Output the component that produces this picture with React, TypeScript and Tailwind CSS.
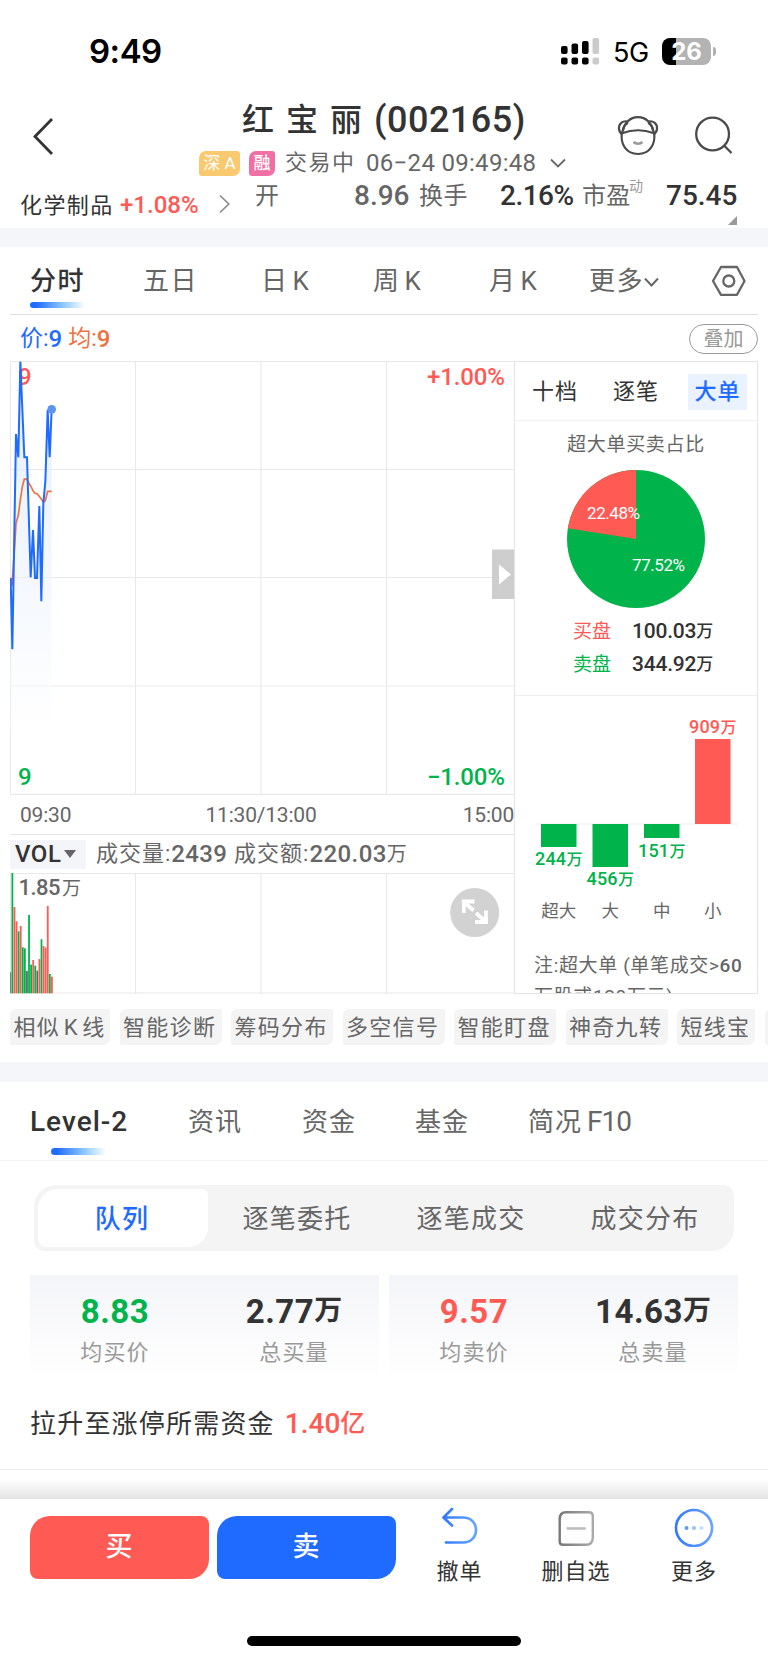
import React from "react";

const RED = "#ff5a54";
const GREEN = "#00b34b";
const BLUE = "#1f6bff";
const GRID = "#e9e9ea";

const PRICE =
  "32,684 37,898 48,252 55,322 61,35 73,322 81,322 92,682 99,540 105,684 111,684 118,468 124,754 130,460 136,395 143,180 149,322 155,178";
const AVERAGE =
  "32,684 36,708 44,590 48,520 55,495 61,450 67,410 73,387 80,388 86,398 92,408 99,422 105,430 111,431 117,438 124,447 130,457 136,452 143,424 155,424";

const VOLUMES: [number, string][] = [
  [63, "#666"], [361, GREEN], [259, RED], [216, RED], [186, GREEN], [202, RED], [138, GREEN],
  [135, GREEN], [67, "#666"], [235, GREEN], [86, GREEN], [100, RED], [83, GREEN], [68, "#666"],
  [103, RED], [162, GREEN], [142, RED], [137, RED], [262, RED], [58, GREEN], [50, RED],
];

const ORDER_BARS = [
  { x: 27, y: 128, h: 23, color: GREEN, label: "244", labelY: 169, name: "超大" },
  { x: 78.5, y: 128, h: 43, color: GREEN, label: "456", labelY: 189, name: "大" },
  { x: 130, y: 128, h: 14, color: GREEN, label: "151", labelY: 161, name: "中" },
  { x: 181, y: 43, h: 85, color: RED, label: "909", labelY: 36.5, name: "小" },
];

function StatusBar() {
  return (
    <div className="flex h-[93px] items-center pt-[9px] pl-[89px]">
      <span className="w-[472px] pt-px font-['Inter',sans-serif] text-[33px] leading-none font-semibold tracking-[-0.5px] text-black">9:49</span>
      <svg width="40" height="28" viewBox="0 0 40 28">
        {[0, 10.5, 21].map((x, i) => (
          <g key={x} fill="#000">
            <rect x={x} y={9 - i * 2.5} width="6.6" height={8 + i * 2.5} rx="2" />
            <rect x={x} y="20.5" width="6.6" height="7" rx="2" />
          </g>
        ))}
        <g fill="#cbcbcb">
          <rect x="31.5" y="1" width="6.6" height="16" rx="2" />
          <rect x="31.5" y="20.5" width="6.6" height="7" rx="2" />
        </g>
      </svg>
      <span className="ml-[12px] w-[49px] pt-[2px] font-['Inter',sans-serif] text-[27px] leading-none tracking-[-0.5px] text-black">5G</span>
      <div className="flex h-[27px] w-[49px] items-center justify-center rounded-[8px] bg-[linear-gradient(90deg,#000_28%,#b3b3b3_28%)] pt-px">
        <span className="font-['Inter',sans-serif] text-[24px] leading-none font-bold text-white">26</span>
      </div>
      <div className="ml-[2px] h-[9px] w-[3px] rounded-r-full bg-[#b3b3b3]" />
    </div>
  );
}

function Header() {
  return (
    <header className="flex h-[86px] items-start">
      <svg className="mt-[24px] ml-[32px] w-[167px]" width="167" height="40" viewBox="0 0 167 40" fill="none" stroke="#333" strokeWidth="2.8">
        <path d="M20 2 L3 19.5 L20 37" />
      </svg>
      <div className="w-[418px]">
        <div className="flex h-[54px] items-center pl-[43px] text-[#333]">
          <span className="text-[32px] leading-none font-medium tracking-[12px]">红宝丽</span>
          <span className="text-[36px] leading-none font-medium tracking-[0.5px]">(002165)</span>
        </div>
        <div className="flex h-[32px] items-center text-[#666]">
          <span className="flex h-[25px] w-[41px] items-center justify-center rounded-[3px] rounded-tl-[7px] rounded-br-[7px] bg-[#f8c96f] text-[17px] leading-none text-white">
            深 A
          </span>
          <span className="ml-[9px] flex h-[25px] w-[26px] items-center justify-center rounded-[3px] rounded-tl-[7px] rounded-br-[7px] bg-[#f070a5] text-[17px] leading-none font-medium text-white">
            融
          </span>
          <span className="ml-[10px] w-[81px] text-[22px] leading-none tracking-[1.5px]">交易中</span>
          <span className="text-[24px] leading-none tracking-[0.3px]">06−24 09:49:48</span>
          <svg className="ml-[14px]" width="16" height="10" viewBox="0 0 16 10" fill="none" stroke="#666" strokeWidth="1.8">
            <path d="M1 1.5 L8 8.5 L15 1.5" />
          </svg>
        </div>
      </div>
      <svg className="mt-[23px]" width="42" height="40" viewBox="0 0 42 40" fill="none" stroke="#4a4a4a" strokeWidth="2.2">
        <path d="M4.800 17.500 C3.500 28 9 38 21 38 C33 38 38.500 28 37.200 17.500" />
        <path d="M5 17.200 C15 13.500 27 13.500 37 17.200 C34.500 7 29 1.200 21 1.200 C13 1.200 7.500 7 5 17.200 Z" />
        <path d="M11.500 5.700 C6 4 1.500 7.500 2 13 C2.300 15.500 3.500 17 5 17.500 M6 15 C6.200 10 8 8 11 7" />
        <path d="M30.500 5.700 C36 4 40.500 7.500 40 13 C39.700 15.500 38.500 17 37 17.500 M36 15 C35.800 10 34 8 31 7" />
        <path d="M16.500 26 C19 28.300 23 28.300 25.500 26" stroke="#999" strokeWidth="2.600" />
      </svg>
      <svg className="ml-[36px] mt-[23px]" width="40" height="40" viewBox="0 0 40 40" fill="none" stroke="#4a4a4a" strokeWidth="2.3">
        <circle cx="17.600" cy="18" r="16.400" />
        <path d="M28.500 29 L36.500 37" />
      </svg>
    </header>
  );
}

function QuoteRow() {
  return (
    <div className="flex h-[49px] items-start leading-none whitespace-nowrap text-[#666]">
      <span className="mt-[16px] ml-[20px] w-[100px] text-[22px] tracking-[1.4px] text-[#333]">化学制品</span>
      <span className="mt-[14px] w-[99px] text-[24px] font-medium text-[#ff5a54]">+1.08%</span>
      <svg className="mt-[15px] w-[36px]" width="36" height="20" viewBox="0 0 36 20" fill="none" stroke="#888" strokeWidth="1.600">
        <path d="M1 1.500 L9.800 10 L1 18.500" />
      </svg>
      <span className="mt-[5px] w-[99px] text-[24px]">开</span>
      <span className="mt-[3px] w-[65px] text-[28px] font-medium">8.96</span>
      <span className="mt-[5px] w-[81px] text-[24px] tracking-[0.5px]">换手</span>
      <span className="mt-[3px] w-[82px] text-[28px] font-medium tracking-[-0.5px] text-[#333]">2.16%</span>
      <span className="mt-[5px] w-[47px] text-[24px] tracking-[0.3px]">市盈</span>
      <span className="w-[37px] text-[14px] text-[#999]">动</span>
      <div className="flex flex-col items-end">
        <span className="mt-[3px] text-[28px] font-medium text-[#333]">75.45</span>
        <svg className="mt-[6px]" width="9" height="9" viewBox="0 0 9 9">
          <path d="M9 0 V9 H0 Z" fill="#999" />
        </svg>
      </div>
    </div>
  );
}

function PeriodTabs() {
  return (
    <nav className="mx-[10px] flex h-[68px] items-start border-b border-[#dedede] pt-[21px] text-[26px] leading-none tracking-[1.5px] text-[#666]">
      <div className="ml-[20px] w-[113px]">
        <div className="font-medium text-[#333]">分时</div>
        <div className="mt-[8px] h-[6px] w-[55px] rounded-full bg-[linear-gradient(90deg,#1f6bff_10%,#8cc8ff_60%,#fff)]" />
      </div>
      <span className="w-[118px]">五日</span>
      <span className="flex w-[112px] gap-[4px]"><span>日</span><span>K</span></span>
      <span className="flex w-[116px] gap-[4px]"><span>周</span><span>K</span></span>
      <span className="flex w-[100px] gap-[4px]"><span>月</span><span>K</span></span>
      <span>更多</span>
      <svg className="mt-[9px]" width="16" height="11" viewBox="0 0 16 11" fill="none" stroke="#666" strokeWidth="1.900">
        <path d="M1 1.500 L7.500 8.500 L14 1.500" />
      </svg>
      <svg className="-mt-[3px] ml-[51px]" width="36" height="32" viewBox="0 0 36 32" fill="none" stroke="#666" strokeWidth="2.300">
        <path d="M10 2 H26 L33.500 16 L26 29.800 H10 L2 16 Z" strokeLinejoin="round" />
        <circle cx="17.800" cy="16" r="5.500" />
      </svg>
    </nav>
  );
}

function PriceChart() {
  return (
    <svg width="504" height="434" viewBox="0 0 504 434" fontFamily="Roboto, sans-serif" fontSize="24" fontWeight="500">
      <defs>
        <linearGradient id="area" x1="0" y1="0" x2="0" y2="1">
          <stop offset="0" stopColor="#d3e3f6" />
          <stop offset="1" stopColor="#fff" />
        </linearGradient>
      </defs>
      <path d="M0 .5H504M0 108.500H504M0 216.500H504M0 325H504M0 433.300H504M.5 0V434M125.500 0V434M251 0V434M376.500 0V434" stroke={GRID} strokeWidth="1.200" />
      <text x="8" y="24" fill={RED}>9</text>
      <g transform="translate(-10 -11) scale(0.33333)">
        <polygon points={`32,1150 ${PRICE} 155,1150`} fill="url(#area)" opacity="0.6" />
        <polyline points={AVERAGE} fill="none" stroke="#f07040" strokeWidth="5" />
        <polyline points={PRICE} fill="none" stroke={BLUE} strokeWidth="6" />
        <circle cx="155" cy="178" r="13" fill="#5b93ee" />
      </g>
      <text x="417" y="24" fill={RED} textLength="78">+1.00%</text>
      <text x="8" y="424" fill={GREEN}>9</text>
      <text x="417" y="424" fill={GREEN} textLength="78">−1.00%</text>
      <rect x="482" y="188.500" width="22" height="49.500" fill="#bdbdbd" opacity="0.750" />
      <path d="M489 203.500 L501 213.500 L489 223.500 Z" fill="#fff" />
    </svg>
  );
}

function VolumeChart() {
  return (
    <svg width="504" height="121" viewBox="0 0 504 121">
      <path d="M0 .5H504M0 120H504M.5 0V121M125.500 0V121M251 0V121M376.500 0V121" stroke={GRID} strokeWidth="1.200" />
      {VOLUMES.map(([v, color], i) => (
        <rect key={i} x={i === 0 ? 0.2 : i * 2.08 - 0.6} y={120.3 - v / 3} width={i === 0 ? 1 : 1.8} height={v / 3} fill={color} />
      ))}
      <g fill="#666" fontFamily="Roboto, 'Noto Sans CJK SC', sans-serif">
        <text x="8.500" y="22" fontSize="22" fontWeight="500" textLength="42">1.85</text>
        <text x="52" y="21.500" fontSize="19">万</text>
      </g>
      <circle cx="464.700" cy="39.500" r="24.500" fill="#d2d2d2" />
      <path d="M455 30 L463.500 37.500 M466 40 L474.500 47.500 M453.800 40 V28.500 H464.500 M476 37.500 V49 H465" fill="none" stroke="#fff" strokeWidth="3.800" />
    </svg>
  );
}

function OrderPie() {
  return (
    <svg className="shrink-0 self-center" width="140" height="140" viewBox="-70 -70 140 140" fontFamily="Roboto, sans-serif" fontSize="17" fill="#fff">
      <circle r="69" fill={GREEN} />
      <path d="M0 0 L-68.150 -10.800 A69 69 0 0 1 0 -69 Z" fill={RED} />
      <text x="-49" y="-20" textLength="53">22.48%</text>
      <text x="-4" y="32" textLength="53">77.52%</text>
    </svg>
  );
}

function OrderBars() {
  return (
    <svg width="243" height="236" viewBox="0 0 243 236" fontFamily="Roboto, 'Noto Sans CJK SC', sans-serif">
      <path d="M20 128H223" stroke="#eee" />
      {ORDER_BARS.map((b) => (
        <g key={b.name}>
          <rect x={b.x - 1} y={b.y} width="35.500" height={b.h} fill={b.color} />
          <text x={b.x - 7} y={b.labelY} fontSize="18" fontWeight="500" fill={b.color} textLength="31">{b.label}</text>
          <text x={b.x + 24.5} y={b.labelY} fontSize="16" fontWeight="500" fill={b.color}>万</text>
          <text x={b.x + 16.7} y="221" fontSize="17.500" fill="#666" textAnchor="middle">{b.name}</text>
        </g>
      ))}
    </svg>
  );
}

function OrderPanel() {
  return (
    <aside className="flex h-[633px] w-[245px] flex-col overflow-hidden border border-[#e4e4e5] leading-none">
      <div className="flex h-[59px] shrink-0 items-center border-b border-[#f2f2f3] pt-px text-[22px] tracking-[1px] text-[#333]">
        <span className="ml-[17px] w-[81px]">十档</span>
        <span className="w-[75px]">逐笔</span>
        <span className="flex h-[36px] w-[59px] items-center justify-center bg-[#eaf1ff] font-medium text-[#1f6bff]">大单</span>
      </div>
      <div className="mt-[14px] mb-[15px] text-center text-[19px] tracking-[0.7px] text-[#666]">超大单买卖占比</div>
      <OrderPie />
      <div className="mt-[6px] flex h-[33px] shrink-0 items-center pl-[58px]">
        <span className="w-[59px] text-[19px] text-[#ff5a54]">买盘</span>
        <span className="text-[21px] font-medium tracking-[-0.2px] text-[#333]">100.03</span>
        <span className="text-[17px] font-medium text-[#333]">万</span>
      </div>
      <div className="flex h-[33px] shrink-0 items-center pl-[58px]">
        <span className="w-[59px] text-[19px] text-[#00b34b]">卖盘</span>
        <span className="text-[21px] font-medium tracking-[-0.2px] text-[#333]">344.92</span>
        <span className="text-[17px] font-medium text-[#333]">万</span>
      </div>
      <div className="mt-[14px] h-px shrink-0 bg-[#eeeeef]" />
      <div className="h-[236px] shrink-0"><OrderBars /></div>
      <p className="mt-[18px] pl-[19px] text-[19px] leading-[31px] tracking-[0.65px] whitespace-nowrap text-[#666]">
        注:超大单 (单笔成交&gt;<span className="font-medium">60</span>
        <br />
        万股或120万元)
      </p>
    </aside>
  );
}

function ChartSection() {
  return (
    <section>
      <div className="flex h-[46px] items-center pt-px pr-[10px] pl-[20px] text-[#1f6bff]">
        <span className="text-[23px] leading-none">价:</span>
        <span className="text-[24px] leading-none font-medium">9</span>
        <span className="ml-[6px] text-[23px] leading-none text-[#f07040]">均:</span>
        <span className="text-[24px] leading-none font-medium text-[#f07040]">9</span>
        <span className="ml-auto flex h-[30px] w-[69px] items-center justify-center rounded-full border border-[#999] pt-px text-[20px] leading-none text-[#999]">
          叠加
        </span>
      </div>
      <div className="flex px-[10px]">
        <div className="flex w-[504px] flex-col">
          <PriceChart />
          <div className="flex h-[40px] items-center justify-between border-b border-[#e4e4e5] pt-[2px] pl-[10px] text-[21px] leading-none tracking-[-0.2px] text-[#666]">
            <span>09:30</span>
            <span className="mr-[12px]">11:30/13:00</span>
            <span>15:00</span>
          </div>
          <div className="flex h-[38px] items-center leading-none text-[#666]">
            <span className="flex h-[29px] w-[76px] items-center bg-[#f4f5f8] pl-[5px] text-[24px] font-medium tracking-[0.5px] text-[#333]">
              VOL
              <svg className="ml-[3px]" width="12" height="8" viewBox="0 0 12 8">
                <path d="M0 0 H12 L6 8 Z" fill="#666" />
              </svg>
            </span>
            <span className="ml-[10px] text-[22px] tracking-[1px]">成交量:</span>
            <span className="text-[24px] font-medium tracking-[0.3px]">2439</span>
            <span className="ml-[7px] text-[22px] tracking-[1px]">成交额:</span>
            <span className="text-[24px] font-medium tracking-[0.4px]">220.03</span>
            <span className="text-[20px]">万</span>
          </div>
          <VolumeChart />
        </div>
        <OrderPanel />
      </div>
    </section>
  );
}

const TOOLS: [string, string][] = [
  ["相似\u200AK\u200A线", "w-[100px]"],
  ["智能诊断", "w-[102px]"],
  ["筹码分布", "w-[102px]"],
  ["多空信号", "w-[102px]"],
  ["智能盯盘", "w-[102px]"],
  ["神奇九转", "w-[102px]"],
  ["短线宝", "w-[78px]"],
  ["", "w-[78px]"],
];

function ToolChips() {
  return (
    <div className="flex h-[68px] gap-[9.500px] overflow-hidden pt-[15px] pl-[10px]">
      {TOOLS.map(([name, width]) => (
        <span
          key={name}
          className={`${width} flex h-[36px] shrink-0 items-center rounded-[2px] rounded-tl-[6px] rounded-br-[7px] bg-[#f4f4f5] pt-px pl-[3.500px] text-[22px] leading-none tracking-[1.300px] whitespace-pre text-[#666]`}
        >
          {name}
        </span>
      ))}
    </div>
  );
}

function InfoTabs() {
  return (
    <nav className="flex h-[79px] items-start border-b border-[#f3f3f4] pt-[26px] text-[26px] leading-none tracking-[1px] text-[#666]">
      <div className="ml-[30px] flex w-[158px] flex-col">
        <span className="text-[28px] font-medium tracking-[1px] text-[#333]">Level-2</span>
        <div className="mt-[12px] ml-[21px] h-[7px] w-[55px] rounded-full bg-[linear-gradient(90deg,#1f6bff_10%,#8cc8ff_60%,#fff)]" />
      </div>
      <span className="w-[114px] pt-px">资讯</span>
      <span className="w-[113px] pt-px">资金</span>
      <span className="w-[113px] pt-px">基金</span>
      <span className="pt-px">简况</span>
      <span className="ml-[5px] text-[28px] tracking-[-1px]">F10</span>
    </nav>
  );
}

function Segments() {
  return (
    <div className="mx-[34px] mt-[24px] flex h-[66px] rounded-tl-[22px] rounded-tr-[10px] rounded-br-[22px] rounded-bl-[10px] bg-[#f4f4f5] p-[4px] text-[26px] leading-none tracking-[1.200px] text-[#666]">
      <span className="flex w-[170px] items-center justify-center rounded-tl-[20px] rounded-tr-[6px] rounded-br-[20px] rounded-bl-[8px] bg-white pt-px pr-[2px] font-medium text-[#1f6bff]">
        队列
      </span>
      <span className="flex flex-1 items-center justify-center pt-px pl-[4px]">逐笔委托</span>
      <span className="flex flex-1 items-center justify-center pt-px pl-[4px]">逐笔成交</span>
      <span className="flex flex-1 items-center justify-center pt-px pl-[4px]">成交分布</span>
    </div>
  );
}

function Stat({ value, unit, label, tone }: { value: string; unit?: string; label: string; tone: string }) {
  return (
    <div className={`flex flex-1 flex-col items-center pt-[19px] leading-none ${tone}`}>
      <div className="flex h-[34px] items-center font-bold">
        <span className="text-[33px] tracking-[0.500px]">{value}</span>
        {unit && <span className="text-[28px]">{unit}</span>}
      </div>
      <span className="mt-[14px] text-[22px] tracking-[1.200px] text-[#999]">{label}</span>
    </div>
  );
}

function QueueSummary() {
  return (
    <div className="mt-[24px] flex h-[106px] gap-[10px] px-[30px]">
      <div className="flex flex-1 bg-linear-to-b from-[#f4f5f8] to-white">
        <Stat value="8.83" label="均买价" tone="pr-[4px] text-[#00b34b]" />
        <Stat value="2.77" unit="万" label="总买量" tone="pl-[5px] text-[#333]" />
      </div>
      <div className="flex flex-1 bg-linear-to-b from-[#f4f5f8] to-white">
        <Stat value="9.57" label="均卖价" tone="pr-[4px] text-[#ff5a54]" />
        <Stat value="14.63" unit="万" label="总卖量" tone="pl-[5px] text-[#333]" />
      </div>
    </div>
  );
}

function BottomBar() {
  return (
    <footer>
      <div className="flex h-[101px] items-start pt-[17px] pl-[30px] text-[22px] leading-none tracking-[1px] text-[#333]">
        <button className="flex h-[63px] w-[179px] items-center justify-center rounded-tl-[20px] rounded-tr-[8px] rounded-br-[20px] rounded-bl-[8px] bg-[#ff5a54] text-[27px] font-medium text-white">
          买
        </button>
        <button className="ml-[8px] flex h-[63px] w-[179px] items-center justify-center rounded-tl-[20px] rounded-tr-[8px] rounded-br-[20px] rounded-bl-[8px] bg-[#1f6bff] text-[27px] font-medium text-white">
          卖
        </button>
        <div className="-mt-[9px] ml-[22px] flex w-[83px] flex-col items-center">
          <svg width="40" height="40" viewBox="0 0 40 40" fill="none" stroke="#4c91fb" strokeWidth="2.700" strokeLinecap="round" strokeLinejoin="round">
            <defs>
              <linearGradient id="back" x1="0" x2="1" y1="0" y2="0">
                <stop offset="0" stopColor="#3478f7" />
                <stop offset="1" stopColor="#66a5ff" />
              </linearGradient>
            </defs>
            <path stroke="url(#back)" d="M12 2 L3.500 10.500 L12 18.500 M3.500 10.500 H23 C31 10.500 36 16 36 23 C36 30 31 35.500 23 35.500 H6" />
          </svg>
          <span className="mt-[14px]">撤单</span>
        </div>
        <div className="-mt-[9px] ml-[22px] flex w-[110px] flex-col items-center pr-[4px]">
          <svg width="40" height="40" viewBox="0 0 40 40" fill="none" stroke="url(#gray)" strokeWidth="2.400">
            <defs>
              <linearGradient id="gray" x1="0" x2="1" y1="0" y2="0">
                <stop offset="0" stopColor="#777" />
                <stop offset="1" stopColor="#aaa" />
              </linearGradient>
            </defs>
            <path d="M10 5.200 H33 Q36.800 5.200 36.800 9 V30.500 Q36.800 37.800 30 37.800 H7 Q3.700 37.800 3.700 34.500 V12 Q3.700 5.200 10 5.200 Z" />
            <rect x="11" y="20.500" width="18.500" height="2" fill="#bbb" stroke="#bbb" strokeWidth="0.500" />
          </svg>
          <span className="mt-[14px]">删自选</span>
        </div>
        <div className="-mt-[9px] ml-[21px] flex w-[80px] flex-col items-center">
          <svg width="40" height="40" viewBox="0 0 40 40" fill="none">
            <circle cx="20" cy="21" r="18" stroke="url(#back)" strokeWidth="2.600" />
            <circle cx="12.500" cy="21" r="2" fill="#5b9bff" />
            <circle cx="20" cy="21" r="2" fill="#96c1ff" />
            <circle cx="27.500" cy="21" r="2" fill="#c4ddff" />
          </svg>
          <span className="mt-[14px]">更多</span>
        </div>
      </div>
      <div className="mx-auto mt-[36px] h-[10px] w-[274px] rounded-full bg-black" />
    </footer>
  );
}

export default function App() {
  return (
    <div className="h-[1663px] w-[768px] overflow-hidden bg-white font-['Roboto','Noto_Sans_CJK_SC',sans-serif]">
      <StatusBar />
      <Header />
      <QuoteRow />
      <div className="h-[19px] bg-[#f5f6f9]" />
      <PeriodTabs />
      <ChartSection />
      <ToolChips />
      <div className="h-[20px] bg-[#f5f6f9]" />
      <InfoTabs />
      <Segments />
      <QueueSummary />
      <div className="flex h-[89px] items-center border-b border-[#eee] pb-[3px] pl-[30px] leading-none">
        <span className="text-[26px] tracking-[1.200px] text-[#333]">拉升至涨停所需资金</span>
        <span className="ml-[10px] text-[28px] font-medium text-[#ff5a54]">1.40</span>
        <span className="text-[25px] font-medium text-[#ff5a54]">亿</span>
      </div>
      <div className="h-[29px] bg-linear-to-b from-white from-30% to-[#e4e4e4]" />
      <BottomBar />
    </div>
  );
}
